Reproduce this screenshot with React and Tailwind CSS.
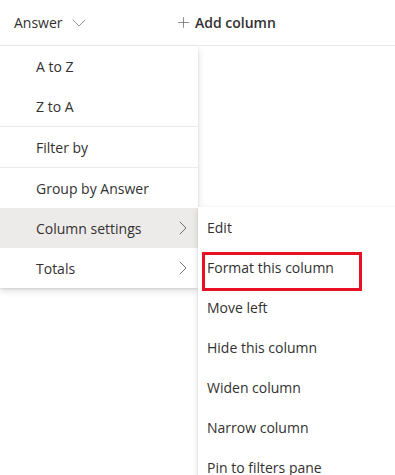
import { ChevronDown, ChevronRight, Plus } from 'lucide-react'

const mainItems = [
  { label: 'A to Z' },
  { label: 'Z to A', divider: true },
  { label: 'Filter by', divider: true },
  { label: 'Group by Answer' },
  { label: 'Column settings', sub: true, active: true },
  { label: 'Totals', sub: true }
]

const subItems = [
  'Edit',
  'Format this column',
  'Move left',
  'Hide this column',
  'Widen column',
  'Narrow column',
  'Pin to filters pane'
]

export default function App() {
  return (
    <div
      className="w-[395px] h-[475px] overflow-hidden bg-white text-[14px] text-[#323130]"
      style={{ fontFamily: '"Open Sans", "Noto Sans", sans-serif' }}
    >
      {/* Header */}
      <div className="flex items-center h-[46px] border-b border-[#edebe9]">
        <div className="flex items-center pl-[14px] w-[175px]">
          <span>Answer</span>
          <ChevronDown size={24} strokeWidth={0.9} className="ml-[4px] text-[#8a8886]" />
        </div>
        <div className="flex items-center">
          <Plus size={17} strokeWidth={1} className="text-[#605e5c]" />
          <span className="ml-[3px] font-semibold">Add column</span>
        </div>
      </div>

      <div className="flex items-start">
        {/* Main menu */}
        <div className="w-[198px] shrink-0 bg-white shadow-[0_3px_7px_rgba(0,0,0,0.13),0_1px_2px_rgba(0,0,0,0.1)] relative z-10">
          {mainItems.map((item) => (
            <div key={item.label}>
              <div
                className={`flex items-center justify-between h-[40px] pl-[36px] pr-[3px] ${
                  item.active ? 'bg-[#edebe9]' : ''
                }`}
              >
                <span>{item.label}</span>
                {item.sub && (
                  <ChevronRight size={24} strokeWidth={0.9} className="text-[#605e5c]" />
                )}
              </div>
              {item.divider && <div className="h-px bg-[#edebe9]" />}
            </div>
          ))}
        </div>

        {/* Submenu */}
        <div className="mt-[161px] w-[210px] shrink-0 bg-white shadow-[0_3px_7px_rgba(0,0,0,0.13),0_1px_2px_rgba(0,0,0,0.1)] relative z-20">
          {subItems.map((label, i) => (
            <div key={label} className="relative flex items-center h-[40px] pl-[9px]">
              <span>{label}</span>
              {i === 1 && (
                <div className="absolute left-[4px] top-[5px] w-[160px] h-[39px] border-[3px] border-[#e81123]" />
              )}
            </div>
          ))}
        </div>
      </div>
    </div>
  )
}
